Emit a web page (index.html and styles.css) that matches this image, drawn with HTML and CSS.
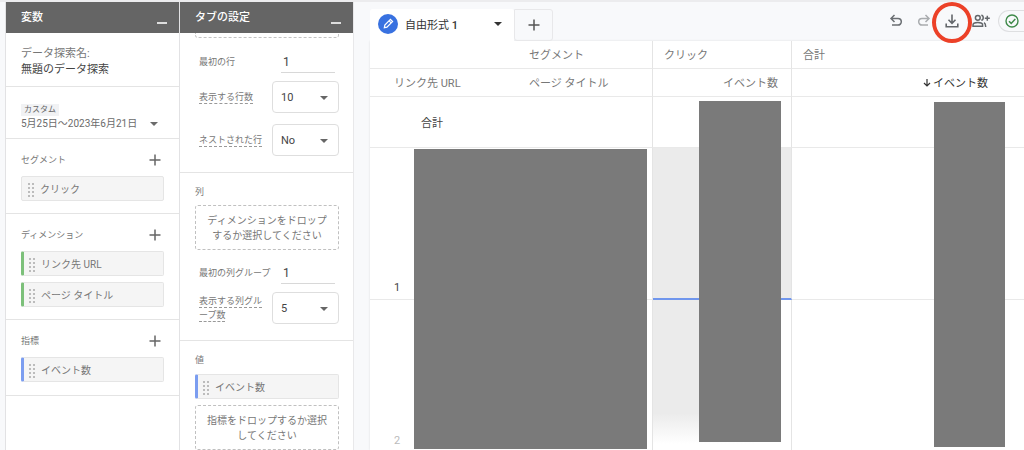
FILE: index.html
```html
<!DOCTYPE html>
<html lang="ja">
<head>
<meta charset="utf-8">
<title>データ探索</title>
<link rel="stylesheet" href="styles.css">
</head>
<body>
<svg class="defs" aria-hidden="true">
  <symbol id="grip" viewBox="0 0 6 14"><g fill="#bcbcbc"><path d="M0 0h2v2H0zM4 0h2v2H4zM0 4h2v2H0zM4 4h2v2H4zM0 8h2v2H0zM4 8h2v2H4zM0 12h2v2H0zM4 12h2v2H4z"/></g></symbol>
  <symbol id="plus" viewBox="0 0 12 12"><path d="M6 0.5v11M0.5 6h11" stroke="currentColor" stroke-width="1.5" fill="none"/></symbol>
  <symbol id="caret" viewBox="0 0 8 4"><path d="M0 0h8L4 4z" fill="currentColor"/></symbol>
</svg>
<div class="app">
  <section class="panel">
    <header class="panel-head"><h2>変数</h2><button class="minimize" aria-label="最小化"></button></header>
    <div class="block name">
      <label for="exploration">データ探索名:</label>
      <input id="exploration" value="無題のデータ探索">
    </div>
    <div class="block date">
      <span class="badge">カスタム</span>
      <button class="range">5月25日〜2023年6月21日<svg class="caret"><use href="#caret"/></svg></button>
    </div>
    <div class="block">
      <div class="block-head"><h3>セグメント</h3><button class="add" aria-label="セグメントを追加"><svg><use href="#plus"/></svg></button></div>
      <button class="chip"><svg><use href="#grip"/></svg>クリック</button>
    </div>
    <div class="block">
      <div class="block-head"><h3>ディメンション</h3><button class="add" aria-label="ディメンションを追加"><svg><use href="#plus"/></svg></button></div>
      <button class="chip green"><svg><use href="#grip"/></svg>リンク先 URL</button>
      <button class="chip green"><svg><use href="#grip"/></svg>ページ タイトル</button>
    </div>
    <div class="block last">
      <div class="block-head"><h3>指標</h3><button class="add" aria-label="指標を追加"><svg><use href="#plus"/></svg></button></div>
      <button class="chip blue"><svg><use href="#grip"/></svg>イベント数</button>
    </div>
  </section>

  <section class="panel">
    <header class="panel-head"><h2>タブの設定</h2><button class="minimize" aria-label="最小化"></button></header>
    <div class="setting rows">
      <div class="drop-tail"></div>
      <div class="field"><label for="first-row">最初の行</label><input id="first-row" value="1"></div>
      <div class="field"><label for="row-count"><span class="hint">表示する行数</span></label><div class="pick"><select id="row-count"><option>10</option></select><svg class="caret"><use href="#caret"/></svg></div></div>
      <div class="field"><label for="nested"><span class="hint">ネストされた行</span></label><div class="pick"><select id="nested"><option>No</option></select><svg class="caret"><use href="#caret"/></svg></div></div>
    </div>
    <div class="setting cols">
      <h3>列</h3>
      <button class="drop">ディメンションをドロップするか選択してください</button>
      <div class="field"><label for="first-col">最初の列グループ</label><input id="first-col" value="1"></div>
      <div class="field"><label class="wrap" for="col-count"><span class="hint">表示する列グループ数</span></label><div class="pick"><select id="col-count"><option>5</option></select><svg class="caret"><use href="#caret"/></svg></div></div>
    </div>
    <div class="setting values">
      <h3>値</h3>
      <button class="chip blue"><svg><use href="#grip"/></svg>イベント数</button>
      <button class="drop">指標をドロップするか選択してください</button>
    </div>
  </section>

  <main class="canvas">
    <div class="topbar">
      <button class="tab">
        <svg class="pencil" viewBox="0 0 20 20"><circle cx="10" cy="10" r="10" fill="#3871e0"/><g transform="translate(10 10) rotate(45)" fill="none" stroke="#fff" stroke-width="1.2"><path d="M-1.5 -5h3v8L0 5.2L-1.5 3zM-1.5 -3h3"/></g></svg>
        <span>自由形式 <b>1</b></span><svg class="caret"><use href="#caret"/></svg>
      </button>
      <button class="new-tab" aria-label="タブを追加"><svg><use href="#plus"/></svg></button>
      <div class="tools">
        <button aria-label="元に戻す"><svg viewBox="0 0 16 16"><path d="M6.5 2L3 5.5L6.5 9M3.2 5.5H10a3.3 3.3 0 0 1 0 6.6H4" fill="none" stroke="#6b6f73" stroke-width="1.5"/></svg></button>
        <button aria-label="やり直す"><svg viewBox="0 0 16 16"><path d="M9.5 2L13 5.5L9.5 9M12.8 5.5H6a3.3 3.3 0 0 0 0 6.6H12" fill="none" stroke="#a9acaf" stroke-width="1.5"/></svg></button>
        <button class="download" aria-label="データをエクスポート"><svg viewBox="0 0 16 16"><path d="M8 1.5v8.5M4.5 6.8L8 10.3L11.5 6.8M2.2 10.5v3.3h11.6v-3.3" fill="none" stroke="#63676b" stroke-width="1.6"/></svg></button>
        <button class="share" aria-label="共有"><svg viewBox="0 0 18 16"><g fill="none" stroke="#63676b" stroke-width="1.5"><circle cx="5.8" cy="4.8" r="2.4"/><path d="M1 13.2v-1.4c0-1.5 2.6-2.4 4.8-2.4s4.8.9 4.8 2.4v1.4zM9.3 2.3c2.6.3 2.6 4.6 0 5M12 9.7c1.3.7 1.7 1.5 1.7 4.2M15.3 2.8v5M12.8 5.3h5"/></g></svg></button>
        <button class="status" aria-label="ステータス"><svg viewBox="0 0 14 14"><circle cx="7" cy="7" r="6" fill="none" stroke="#3f8a4a" stroke-width="1.4"/><path d="M4 7.2l2.2 2.2L10.3 5" fill="none" stroke="#3f8a4a" stroke-width="1.5"/></svg></button>
      </div>
    </div>
    <div class="sheet">
      <table>
        <colgroup><col class="c-link"><col class="c-title"><col class="c-click"><col></colgroup>
        <thead>
          <tr><th></th><th class="edge">セグメント</th><th class="edge group">クリック</th><th class="group">合計</th></tr>
          <tr><th>リンク先 URL</th><th class="edge">ページ タイトル</th><th class="edge num">イベント数</th><th class="num sorted"><svg viewBox="0 0 8 8"><path d="M4 0v7M1 4l3 3l3-3" fill="none" stroke="#333" stroke-width="1.2"/></svg>イベント数</th></tr>
        </thead>
        <tbody>
          <tr class="total"><th colspan="2" class="edge">合計</th><td class="edge"></td><td></td></tr>
          <tr class="data"><th>1</th><td class="edge"></td><td class="edge hot"></td><td></td></tr>
          <tr class="data faded"><th>2</th><td class="edge"></td><td class="edge warm"></td><td></td></tr>
        </tbody>
      </table>
      <div class="mask mask-names"></div>
      <div class="mask mask-click"></div>
      <div class="mask mask-total"></div>
    </div>
  </main>
</div>
</body>
</html>
```

FILE: styles.css
```css
* { box-sizing: border-box; }
body, h2, h3 { margin: 0; }
body, button, input, select { font-family: Roboto, "Noto Sans CJK JP", sans-serif; }
body { background: #f8f9fb; color: #777; overflow: hidden; }
button, input, select { border: 0; padding: 0; margin: 0; background: none; color: inherit; border-radius: 0; outline: 0; }
h2, h3 { font-weight: 400; }
svg { display: block; flex: none; }
.defs { position: absolute; width: 0; height: 0; }
.caret { width: 8px; height: 4px; }

.app { display: flex; height: 100vh; padding-left: 5px; border-top: 2px solid #ececee; }

.panel { flex: none; width: 174px; background: #fff; border-left: 1px solid #e2e2e4; overflow: hidden; }
.panel + .panel { width: 175px; border-right: 1px solid #e8e8ea; }
.panel-head { display: flex; justify-content: space-between; height: 31px; padding: 0 12px 0 15px; background: #656565; color: #fff; }
.panel-head h2 { font-size: 11px; line-height: 31px; font-weight: 500; }
.minimize { width: 10px; height: 2px; margin-top: 20px; background: #ddd; }

.block { padding: 13px 15px 12px; border-bottom: 1px solid #e4e4e4; }
.last { padding-bottom: 13px; }
.name { padding: 13px 15px 8px; }
.name label, .name input { display: block; width: 100%; height: 16px; font-size: 11px; line-height: 16px; }
.name input { color: #444; }
.date { padding: 17px 15px 6px; }
.badge { display: block; width: 38px; background: #f1f2f4; font-size: 8px; line-height: 12px; text-align: center; color: #666; }
.range { display: flex; align-items: center; justify-content: space-between; width: 137px; font-size: 10px; line-height: 16px; color: #6b6b6b; }
.block-head { display: flex; justify-content: space-between; align-items: center; height: 16px; margin-bottom: 8px; }
h3 { font-size: 9px; line-height: 16px; }
.add { width: 18px; padding: 3px; color: #666; }
.add svg { width: 12px; height: 12px; }
.chip { display: flex; align-items: center; gap: 6px; width: 100%; height: 25px; padding: 2px 0 0 6px; border: 1px solid #e5e5e5; border-radius: 2px; background: #f5f5f5; font-size: 10px; line-height: 15px; text-align: left; }
.chip + .chip { margin-top: 6px; }
.chip svg { width: 6px; height: 14px; }
.chip.green { padding-left: 5px; border-left: 3px solid #7cc07a; }
.chip.blue { padding-left: 5px; border-left: 3px solid #7b9df0; }

.setting { padding: 0 14px 0 15px; border-bottom: 1px solid #e4e4e4; }
.drop-tail { height: 5px; border: 1px dashed #c4c4c4; border-top: 0; border-radius: 0 0 3px 3px; }
.field { display: grid; grid-template-columns: 73px 67px; padding-left: 4px; align-items: center; }
.field label { font-size: 9px; line-height: 14px; }
.field .wrap { padding-right: 7px; }
.field input { width: 54px; height: 22px; margin-left: 9px; padding-left: 2px; border-bottom: 1px solid #d8d8d8; font-size: 12px; color: #444; }
.hint { padding-bottom: 1px; border-bottom: 1px dashed #999; }
.pick { position: relative; }
.pick select { appearance: none; display: block; width: 100%; height: 32px; padding-left: 8px; border: 1px solid #dedede; border-radius: 4px; background: #fff; font-size: 11px; color: #444; }
.pick .caret { position: absolute; right: 11px; top: 15px; color: #666; pointer-events: none; }
.rows { display: grid; row-gap: 11px; padding-bottom: 16px; }
.rows .drop-tail + .field { margin: 2px 0 -3px; }
.cols { padding-top: 11px; padding-bottom: 16px; }
.cols .drop { margin: 5px 0 12px; }
.cols .field + .field { margin-top: 8px; }
.values { padding-top: 11px; }
.values .chip { margin: 6px 0; }
.drop { display: block; width: 100%; height: 45px; padding: 0 10px; border: 1px dashed #c0c0c0; border-radius: 3px; font-size: 10px; line-height: 15px; }

.canvas { flex: 1; min-width: 0; display: flex; flex-direction: column; padding-left: 16px; overflow: hidden; }
.topbar { position: relative; z-index: 1; display: flex; flex: none; height: 39px; }
.tab { display: flex; align-items: center; width: 144px; height: 32px; margin-top: 7px; padding: 0 12px 2px 8px; border-radius: 3px 3px 0 0; background: #fff; font-size: 11px; color: #333; }
.tab b { font-weight: 500; }
.tab .caret { margin-left: auto; }
.pencil { width: 20px; height: 20px; margin-right: 7px; }
.new-tab { display: grid; place-items: center; width: 39px; height: 32px; margin-top: 7px; border: 1px solid #e8e8ea; border-radius: 0 3px 3px; color: #555; }
.new-tab svg { width: 12px; height: 12px; }
.tools { display: flex; align-items: center; gap: 12px; height: 38px; margin-left: auto; }
.tools svg { width: 16px; height: 16px; }
.tools .download { position: relative; }
.download::after { content: ""; position: absolute; inset: -11px -12px -14px; border: 4px solid #ec4128; border-radius: 50%; }
.tools .share { margin-right: -4px; }
.tools .share svg { width: 18px; }
.tools .status { width: 26px; height: 22px; padding-left: 6px; border: 1px solid #dedfe1; border-right: 0; border-radius: 11px 0 0 11px; }
.tools .status svg { width: 14px; height: 14px; }

.sheet { position: relative; flex: 1; min-height: 0; overflow: hidden; background: #fff; box-shadow: 0 0 2px #dcdde0; }
table { width: 100%; border-collapse: separate; border-spacing: 0; table-layout: fixed; font-size: 11px; line-height: 16px; }
.c-link { width: 135px; }
.c-title { width: 148px; }
.c-click { width: 139px; }
th, td { padding: 0 0 0 24px; border-bottom: 1px solid #e9e9e9; font-weight: 400; text-align: left; }
thead th { height: 28px; padding-top: 3px; }
.edge { border-right: 1px solid #e4e4e4; }
th.group { padding-left: 11px; }
th.num { padding-right: 13px; text-align: right; }
th.sorted { padding-right: 36px; color: #333; }
.sorted svg { display: inline-block; width: 8px; height: 8px; margin-right: 2px; }
.total th { height: 51px; padding: 4px 0 0 51px; color: #444; }
.data th { height: 152px; padding-bottom: 3px; vertical-align: bottom; color: #444; }
.faded th { color: #bbb; padding-bottom: 2px; }
.data .edge.hot { background: #ebebeb; border-bottom: 2px solid #7096ed; }
.warm { background: linear-gradient(#ebebeb 113px, #fff 144px) no-repeat 0 0 / 101px 100%; }
.mask { position: absolute; background: #7a7a7a; }
.mask-names { left: 44px; top: 108px; width: 233px; height: 300px; }
.mask-click { left: 329px; top: 60px; width: 82px; height: 341px; }
.mask-total { right: 19px; top: 61px; width: 71px; height: 345px; }
```
